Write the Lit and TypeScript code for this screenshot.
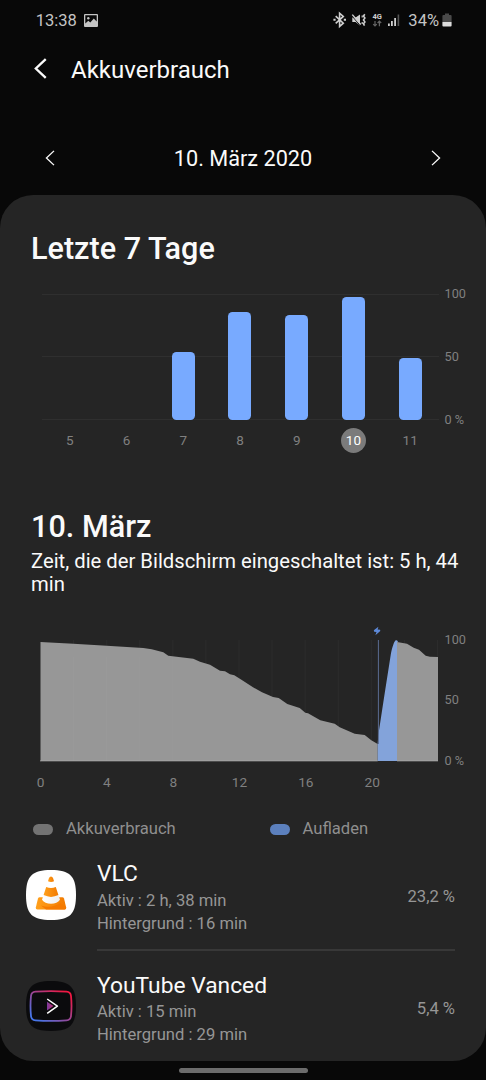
import { LitElement, html, svg, css, nothing } from 'lit';
import { customElement, property } from 'lit/decorators.js';
import { classMap } from 'lit/directives/class-map.js';
import { styleMap } from 'lit/directives/style-map.js';

type Day = {
  day: number;
  usage: number;
};

type App = {
  name: string;
  active: string;
  background: string;
  percent: string;
  icon: 'vlc' | 'vanced';
};

const DAYS: Day[] = [
  { day: 5, usage: 0 },
  { day: 6, usage: 0 },
  { day: 7, usage: 54 },
  { day: 8, usage: 86 },
  { day: 9, usage: 83.3 },
  { day: 10, usage: 98 },
  { day: 11, usage: 49.6 },
];

const APPS: App[] = [
  {
    name: 'VLC',
    active: '2 h, 38 min',
    background: '16 min',
    percent: '23,2 %',
    icon: 'vlc',
  },
  {
    name: 'YouTube Vanced',
    active: '15 min',
    background: '29 min',
    percent: '5,4 %',
    icon: 'vanced',
  },
];

@customElement('battery-status-bar')
export class BatteryStatusBar extends LitElement {
  render() {
    return html`
      <span class="time">13:38</span>
      <svg class="picture" width="14" height="13" viewBox="0 0 14 13">
        <path
          fill="#c4c4c4"
          fill-rule="evenodd"
          d="M1 0h12a1 1 0 0 1 1 1v11a1 1 0 0 1-1 1H1a1 1 0 0 1-1-1V1a1 1 0 0 1 1-1zM1.3 1.3v8.2l3-2.7 2 1.6 3.5-4 2.9 3V1.3z"
        />
        <circle cx="4.3" cy="4.2" r="1.2" fill="#c4c4c4" />
      </svg>
      <span class="spacer"></span>
      <svg width="75" height="20" viewBox="0 0 75 20">
        <g fill="none" stroke="#cfcfcf" stroke-width="1.6">
          <path d="M2.7 6.2l7.6 7-3.7 3.2V3.2l3.7 3.2-7.6 7" />
          <path d="M.4 9.8h2.2M10.8 9.8H13" stroke-width="2" />
        </g>
        <path fill="#cfcfcf" d="M19.3 7.4h3.3l4.4-3v11l-4.4-3.5h-3.3z" />
        <path d="M18.5 5.4l8.6 10" stroke="#080808" stroke-width="1" />
        <path d="M19.3 4.6l8.5 9.900" stroke="#cfcfcf" stroke-width="1.4" />
        <path
          d="M31.800 4.2l-1.3 1.9 1.4 1.9-1.4 1.9 1.4 2-1.4 1.9 1 1.8"
          fill="none"
          stroke="#cfcfcf"
          stroke-width="1.6"
        />
        <path d="M29.2 5.5v2M29.2 12v2" stroke="#cfcfcf" stroke-width="1.2" />
        <text x="39.4" y="8.9" class="network">4G</text>
        <path
          d="M42 11v5M40.2 14.1l1.8 1.9 1.8-1.9M46.4 16.2v-5M44.6 13l1.8-1.9 1.8 1.9"
          fill="none"
          stroke="#666"
          stroke-width="1.2"
        />
        <path fill="#cfcfcf" d="M55 13.4h1.8V16H55zM58 11h1.8v5H58zM61.2 8.1H63V16h-1.8z" />
        <path fill="#555" d="M64.6 4.5h1.6V16h-1.6z" />
      </svg>
      <span class="charge">34%</span>
      <svg width="10" height="14" viewBox="0 0 10 14">
        <path fill="#4a4a4a" d="M3 .5h4V2h1.6a1 1 0 0 1 1 1v6H.4V3a1 1 0 0 1 1-1H3z" />
        <path fill="#dcdcdc" d="M.4 9h9.2v3.4a1 1 0 0 1-1 1H1.4a1 1 0 0 1-1-1z" />
      </svg>
    `;
  }

  static styles = css`
    :host {
      display: flex;
      align-items: center;
      box-sizing: border-box;
      height: 40px;
      padding: 0 34px 0 35.7px;
      color: #c4c4c4;
      font-size: 16.5px;
    }
    .picture {
      margin-left: 7px;
    }
    .spacer {
      flex: 1;
    }
    .network {
      font: 700 7.5px Roboto, sans-serif;
      fill: #cfcfcf;
    }
    .charge {
      margin: 0 3px 0 0;
    }
  `;
}

@customElement('week-chart')
export class WeekChart extends LitElement {
  @property({ type: Array }) days: Day[] = [];

  @property({ type: Number }) selected = 0;

  render() {
    return html`
      <div class="plot">
        ${this.days.map(
          d => html`
            <div class="column">
              ${d.usage
                ? html`<div class="bar" style=${styleMap({ height: `${d.usage}%` })}></div>`
                : nothing}
            </div>
          `
        )}
      </div>
      <div class="scale">
        <span>100</span>
        <span>50</span>
        <span>0 %</span>
      </div>
      <div class="labels">
        ${this.days.map(
          d => html`
            <div class="label">
              <span class=${classMap({ selected: d.day === this.selected })}>${d.day}</span>
            </div>
          `
        )}
      </div>
    `;
  }

  static styles = css`
    :host {
      display: grid;
      grid-template-columns: 397px 1fr;
      row-gap: 8px;
      padding: 27.4px 0 0 41.5px;
    }
    .plot,
    .labels {
      display: grid;
      grid-template-columns: repeat(7, 1fr);
    }
    .plot {
      height: 126px;
      background: linear-gradient(#2f2f2f, #2f2f2f) 0 0 / 100% 1px no-repeat,
        linear-gradient(#2f2f2f, #2f2f2f) 0 50% / 100% 1px no-repeat,
        linear-gradient(#2f2f2f, #2f2f2f) 0 100% / 100% 1px no-repeat;
    }
    .column {
      display: flex;
      align-items: flex-end;
      justify-content: center;
    }
    .bar {
      width: 23px;
      border-radius: 4.5px;
      background: #78aaff;
    }
    .scale {
      display: flex;
      flex-direction: column;
      justify-content: space-between;
      margin: -7.6px 0 -7.9px 6px;
      color: #808080;
      font-size: 12.7px;
      line-height: 16px;
    }
    .label {
      display: flex;
      justify-content: center;
      color: #808080;
      font-size: 13.5px;
      line-height: 25px;
    }
    .label span {
      width: 25px;
      height: 25px;
      text-align: center;
    }
    .label .selected {
      border-radius: 50%;
      background: #7b7b7b;
      color: #fff;
    }
  `;
}

@customElement('day-chart')
export class DayChart extends LitElement {
  static readonly before =
    'M.5 137V18L33.3 19.7 66.7 21.7 103.3 24 111.7 25.3 123.3 28.3 128.3 31.7 153.3 34.7 160 37.7 170 40.7 180 46.7 185 47.3 190 50.3 194.3 51.3 203 56.7 213 63.3 222 68.3 233 73 238.7 74 247.3 80 259.7 84 265.3 88.7 268 89.3 280.3 96.3 294.7 99.7 299.7 103.3 314.7 109.7 324.7 111 331.3 116.3 337.7 120V137z';

  static readonly charging =
    'M337.7 137V120L338.3 111 344.7 69.3 350.7 31C352 24 354 17.5 355.7 16.3Q357.5 15.6 358 18H357V137z';

  static readonly after =
    'M357 137V18L367 19.7 373.7 23.7 379 25.7 385.7 31.7 390 32.7 398 33V137z';

  gridLine(hour: number) {
    const x = 0.5 + hour * 16.54;
    return svg`<line x1=${x} x2=${x} y1="16" y2="137" />`;
  }

  render() {
    const hours = [2, 4, 6, 8, 10, 12, 14, 16, 18, 20, 22, 24];
    return html`
      <svg width="398" height="138" viewBox="0 0 398 138">
        <g stroke="#2d2d2d">${hours.map(h => this.gridLine(h))}</g>
        <path fill="#979797" d=${DayChart.before} />
        <path fill="#979797" d=${DayChart.after} />
        <path fill="#83a3da" d=${DayChart.charging} />
        <g stroke="#9a9a9a">${hours.slice(0, 4).map(
          h => svg`<line x1=${0.5 + h * 16.54} x2=${0.5 + h * 16.54} y1="33" y2="137" />`
        )}</g>
        <path d="M0 136.9h337.7M357 136.9h41" stroke="#a8a8a8" stroke-width=".8" />
        <path d="M338.4 16v104" stroke="#5a6c91" />
        <path
          fill="#5d89d8"
          d="M338.4 2.7l-4.6 3.5.4 1.6 2.3.2-1.1 3.3 4.900-4.2-.2-1.4-2.5-.3z"
        />
      </svg>
      <div class="scale">
        <span>100</span>
        <span>50</span>
        <span>0 %</span>
      </div>
      <div class="hours">${[0, 4, 8, 12, 16, 20].map(h => html`<span>${h}</span>`)}</div>
    `;
  }

  static styles = css`
    :host {
      display: grid;
      grid-template-columns: 398px 1fr;
      row-gap: 10px;
      padding: 27px 0 0 40px;
    }
    svg {
      display: block;
    }
    .scale {
      display: flex;
      flex-direction: column;
      justify-content: space-between;
      margin: 8px 0 -7px 6.5px;
      color: #808080;
      font-size: 12.7px;
      line-height: 16px;
    }
    .hours {
      display: grid;
      grid-template-columns: repeat(6, 66.3px);
      margin-left: -32.5px;
      color: #808080;
      font-size: 13.7px;
      line-height: 20px;
      text-align: center;
    }
  `;
}

@customElement('app-usage-row')
export class AppUsageRow extends LitElement {
  @property({ type: Object }) app!: App;

  vlcIcon() {
    return html`
      <svg width="50" height="50" viewBox="0 0 50 50">
        <defs>
          <linearGradient id="cone" x1="0" x2="1">
            <stop offset="0" stop-color="#ffa01c" />
            <stop offset="1" stop-color="#f27a00" />
          </linearGradient>
          <linearGradient id="stripe" x1="0" x2="1">
            <stop offset="0" stop-color="#fff" />
            <stop offset="1" stop-color="#efefef" />
          </linearGradient>
        </defs>
        <path fill="#fff" d="M25 0C44 0 50 6 50 25S44 50 25 50 0 44 0 25 6 0 25 0z" />
        <path
          fill="url(#cone)"
          d="M13.7 27.3h22.6q1.3 0 1.7 1.2l2.2 9q.3 1.9-1.6 1.9H11.4q-1.9 0-1.6-1.9l2.2-9q.4-1.2 1.7-1.2z"
        />
        <path fill="#f57a00" d="M15 35.5q10 3.5 19.5-2.5l5.6 4.5q.2 1.9-1.5 1.9H20z" />
        <path fill="url(#stripe)" d="M17.7 24.5h14.6l1.7 5.3q-2.8 4-9 4t-9-4z" />
        <path fill="url(#cone)" d="M20.2 16.9q4.8 2 9.6 0l2.6 8.2q-7.4 3.6-14.8 0z" />
        <path fill="url(#cone)" d="M22 11.3l1-3.3q.6-1.5 2-1.5t2 1.5l1 3.3q-3 1.6-6 0z" />
      </svg>
    `;
  }

  vancedIcon() {
    return html`
      <svg width="50" height="50" viewBox="0 0 50 50">
        <defs>
          <linearGradient id="frame" x1="0" y1="1" x2="1" y2="0">
            <stop offset="0.1" stop-color="#4775e8" />
            <stop offset="0.5" stop-color="#9a4593" />
            <stop offset="0.9" stop-color="#f01842" />
          </linearGradient>
          <linearGradient id="play" x1="0" x2="1">
            <stop offset="0" stop-color="#7b3c9e" />
            <stop offset="1" stop-color="#c02d73" />
          </linearGradient>
        </defs>
        <path fill="#0b0b0d" d="M25 0C44 0 50 6 50 25S44 50 25 50 0 44 0 25 6 0 25 0z" />
        <path
          fill="none"
          stroke="url(#frame)"
          stroke-width="1.8"
          d="M9.5 10.6Q25 9.6 40.5 10.6Q44.6 10.9 45 15Q46 25 45 35Q44.6 39.1 40.5 39.4Q25 40.4 9.5 39.4Q5.4 39.1 5 35Q4 25 5 15Q5.4 10.9 9.5 10.6z"
        />
        <path fill="url(#play)" d="M21 20.8v8.6l6.5-4.3z" />
        <path
          fill="none"
          stroke="#fff"
          stroke-width="1.5"
          stroke-linejoin="round"
          d="M21.2 18l10.2 7.2-10.2 7.2"
        />
      </svg>
    `;
  }

  render() {
    const { name, active, background, percent, icon } = this.app;
    return html`
      ${icon === 'vlc' ? this.vlcIcon() : this.vancedIcon()}
      <div class="info">
        <div class="name">${name}</div>
        <div>Aktiv : ${active}</div>
        <div>Hintergrund : ${background}</div>
      </div>
      <div class="percent">${percent}</div>
    `;
  }

  static styles = css`
    :host {
      display: flex;
      align-items: flex-start;
      height: 74px;
      padding: 0 31px 0 26px;
      color: #969696;
      font-size: 16.6px;
      line-height: 23px;
    }
    svg {
      margin-top: 9.5px;
    }
    .info {
      flex: 1;
      margin: 1px 0 0 21px;
    }
    .name {
      margin-bottom: 1.5px;
      color: #fafafa;
      font-size: 22.8px;
      line-height: 26px;
    }
    .percent {
      margin-top: 25px;
    }
  `;
}

@customElement('app-root')
export class AppRoot extends LitElement {
  chevron(direction: 'left' | 'right', size: 'large' | 'small') {
    const points = direction === 'left' ? '10,1 1.5,9 10,17' : '1,1 9.5,9 1,17';
    return html`
      <svg class=${size} viewBox="0 0 11 18">
        <polyline points=${points} />
      </svg>
    `;
  }

  render() {
    return html`
      <battery-status-bar></battery-status-bar>
      <header>${this.chevron('left', 'large')} Akkuverbrauch</header>
      <nav>
        ${this.chevron('left', 'small')}
        <span>10. März 2020</span>
        ${this.chevron('right', 'small')}
      </nav>
      <main>
        <h2>Letzte 7 Tage</h2>
        <week-chart .days=${DAYS} .selected=${10}></week-chart>
        <h2 class="day">10. März</h2>
        <p>Zeit, die der Bildschirm eingeschaltet ist: 5 h, 44 min</p>
        <day-chart></day-chart>
        <div class="legend">
          <div><i></i>Akkuverbrauch</div>
          <div><i class="charging"></i>Aufladen</div>
        </div>
        ${APPS.map(
          (app, i) => html`
            ${i > 0 ? html`<hr />` : nothing}
            <app-usage-row .app=${app}></app-usage-row>
          `
        )}
      </main>
      <div class="handle"></div>
    `;
  }

  static styles = css`
    :host {
      display: flex;
      flex-direction: column;
      box-sizing: border-box;
      width: 486px;
      height: 1080px;
      overflow: hidden;
      background: #080808;
      color: #fafafa;
      font-family: Roboto, sans-serif;
    }
    header {
      display: flex;
      align-items: center;
      gap: 24px;
      height: 60px;
      padding-left: 34px;
      font-size: 24px;
    }
    nav {
      display: flex;
      align-items: center;
      justify-content: space-between;
      height: 54px;
      margin: 31px 45px 10px;
      font-size: 21.7px;
    }
    polyline {
      fill: none;
      stroke: #fafafa;
      stroke-width: 2;
    }
    .large {
      width: 13px;
      height: 21px;
      margin-top: -3px;
    }
    .small {
      width: 10px;
      height: 16px;
      margin-top: -1px;
    }
    .small polyline {
      stroke-width: 1.5;
    }
    main {
      box-sizing: border-box;
      height: 866px;
      padding-top: 35.6px;
      border-radius: 33px;
      background: #252525;
    }
    h2 {
      margin: 0 31px;
      font-size: 30.6px;
      font-weight: 500;
      line-height: 36px;
    }
    .day {
      margin-top: 56.5px;
    }
    p {
      margin: 4.5px 24px 0 31px;
      font-size: 20.25px;
      line-height: 23.5px;
    }
    .legend {
      display: grid;
      grid-template-columns: 236.5px 1fr;
      margin: 27.2px 0 20.9px 33px;
      color: #8f8f8f;
      font-size: 16.6px;
      line-height: 20px;
    }
    .legend div {
      display: flex;
      align-items: center;
      gap: 13px;
    }
    i {
      width: 20px;
      height: 11px;
      border-radius: 6px;
      background: #737373;
    }
    .charging {
      background: #5c80bd;
    }
    hr {
      height: 2px;
      margin: 15px 31px 20.5px 97px;
      border: 0;
      background: #383838;
    }
    .handle {
      width: 129px;
      height: 5px;
      margin: 7px auto 0;
      border-radius: 3px;
      background: #6c6c6c;
    }
  `;
}
